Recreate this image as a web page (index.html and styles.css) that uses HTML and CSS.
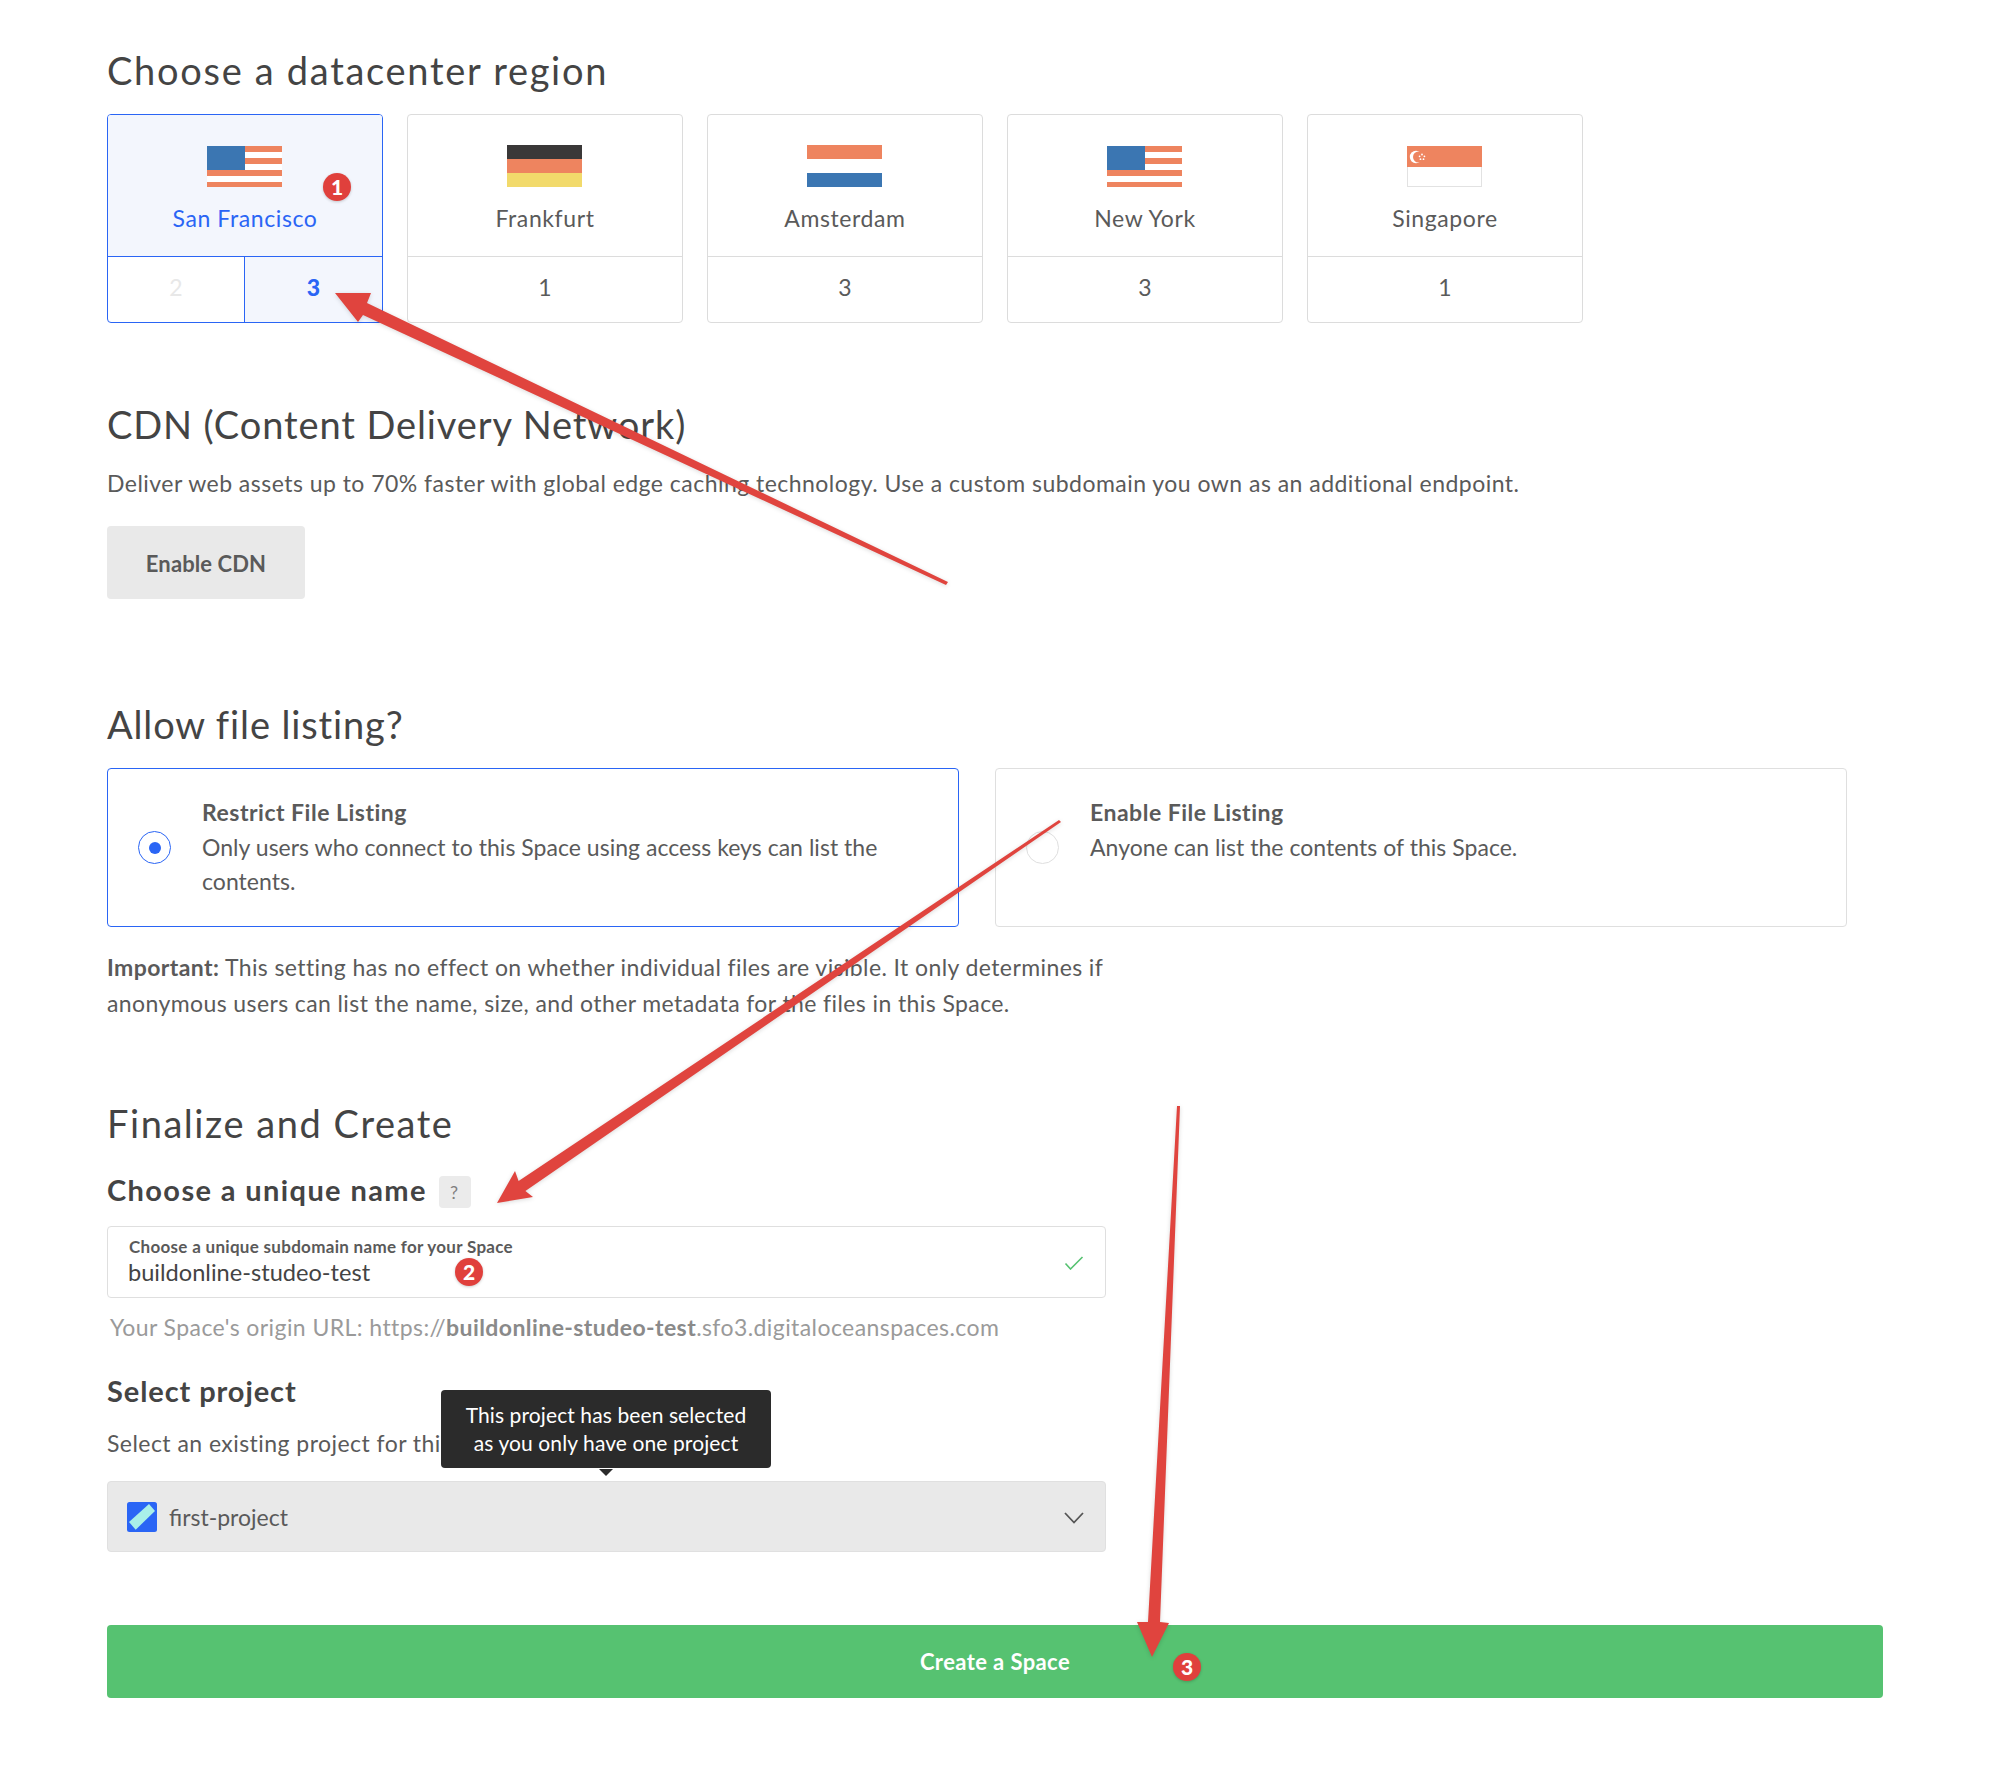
FILE: index.html
```html
<!DOCTYPE html>
<html lang="en">
<head>
  <meta charset="UTF-8">
  <title>Create a Space</title>
  <link rel="stylesheet" href="styles.css">
</head>
<body>
  <main class="page">
    <h2 class="region-title">Choose a datacenter region</h2>
    <div class="regions">
      <div class="region region-active">
        <div class="region-top">
          <svg class="flag" viewBox="0 0 75 42"><rect y="1" width="75" height="41" fill="#ee845f"/><rect y="7" width="75" height="6" fill="#fff"/><rect y="19" width="75" height="6" fill="#fff"/><rect y="31" width="75" height="6" fill="#fff"/><rect y="1" width="38" height="24" fill="#3b76b2"/></svg>
          <span>San Francisco</span>
        </div>
        <div class="region-bottom">
          <span class="slot slot-off">2</span>
          <span class="slot slot-on">3</span>
        </div>
      </div>
      <div class="region">
        <div class="region-top">
          <svg class="flag" viewBox="0 0 75 42"><rect width="75" height="14" fill="#3a3838"/><rect y="14" width="75" height="14" fill="#ee845f"/><rect y="28" width="75" height="14" fill="#f2da6b"/></svg>
          <span>Frankfurt</span>
        </div>
        <div class="region-bottom"><span class="slot">1</span></div>
      </div>
      <div class="region">
        <div class="region-top">
          <svg class="flag" viewBox="0 0 75 42"><rect width="75" height="14" fill="#ee845f"/><rect y="14" width="75" height="14" fill="#fff"/><rect y="28" width="75" height="14" fill="#3b76b2"/></svg>
          <span>Amsterdam</span>
        </div>
        <div class="region-bottom"><span class="slot">3</span></div>
      </div>
      <div class="region">
        <div class="region-top">
          <svg class="flag" viewBox="0 0 75 42"><rect y="1" width="75" height="41" fill="#ee845f"/><rect y="7" width="75" height="6" fill="#fff"/><rect y="19" width="75" height="6" fill="#fff"/><rect y="31" width="75" height="6" fill="#fff"/><rect y="1" width="38" height="24" fill="#3b76b2"/></svg>
          <span>New York</span>
        </div>
        <div class="region-bottom"><span class="slot">3</span></div>
      </div>
      <div class="region">
        <div class="region-top">
          <svg class="flag" viewBox="0 0 75 42"><rect x=".5" y="21" width="74" height="20.500" fill="#fff" stroke="#e2e2e2"/><rect y="1" width="75" height="21" fill="#ee845f"/><circle cx="9" cy="12" r="6.200" fill="#fff"/><circle cx="11.500" cy="12" r="5.500" fill="#ee845f"/><circle cx="15" cy="9.500" r=".9" fill="#fff"/><circle cx="12.600" cy="11.300" r=".9" fill="#fff"/><circle cx="17.400" cy="11.300" r=".9" fill="#fff"/><circle cx="13.500" cy="14.200" r=".9" fill="#fff"/><circle cx="16.500" cy="14.200" r=".9" fill="#fff"/></svg>
          <span>Singapore</span>
        </div>
        <div class="region-bottom"><span class="slot">1</span></div>
      </div>
    </div>

    <h2 class="cdn-title">CDN (Content Delivery Network)</h2>
    <p class="cdn-text">Deliver web assets up to 70% faster with global edge caching technology. Use a custom subdomain you own as an additional endpoint.</p>
    <button class="btn-grey">Enable CDN</button>

    <h2 class="listing-title">Allow file listing?</h2>
    <div class="listing-row">
      <div class="listing listing-active">
        <span class="radio"></span>
        <div class="listing-text">
          <strong>Restrict File Listing</strong>
          <p>Only users who connect to this Space using access keys can list the contents.</p>
        </div>
      </div>
      <div class="listing">
        <span class="radio"></span>
        <div class="listing-text">
          <strong>Enable File Listing</strong>
          <p>Anyone can list the contents of this Space.</p>
        </div>
      </div>
    </div>
    <p class="important"><strong>Important:</strong> This setting has no effect on whether individual files are visible. It only determines if anonymous users can list the name, size, and other metadata for the files in this Space.</p>

    <h2 class="final-title">Finalize and Create</h2>
    <div class="form-col">
      <h3 class="name-title">Choose a unique name <span class="help">?</span></h3>
      <div class="name-field">
        <div>
          <label>Choose a unique subdomain name for your Space</label>
          <div class="name-value">buildonline-studeo-test</div>
        </div>
        <svg class="check" viewBox="0 0 20 14"><path d="M1.500 7.500l5 5.500L18.500 1" fill="none" stroke="#56c271" stroke-width="1.600"/></svg>
      </div>
      <p class="origin">Your Space's origin URL: https://<b>buildonline-studeo-test</b>.sfo3.digitaloceanspaces.com</p>

      <h3 class="project-title">Select project</h3>
      <p class="project-text">Select an existing project for this Space to belong to.</p>
      <div class="project-wrap">
        <div class="tooltip">This project has been selected<br>as you only have one project</div>
        <div class="project-select">
          <svg class="project-icon" viewBox="0 0 30 30"><rect width="30" height="30" rx="2.500" fill="#2a65f5"/><polygon points="22,2 28,9 8.700,27.700 2,20" fill="#a9efe9"/></svg>
          <span>first-project</span>
          <svg class="chevron" viewBox="0 0 20 12"><path d="M1 1l9 9.500L19 1" fill="none" stroke="#555" stroke-width="1.800"/></svg>
        </div>
      </div>
    </div>

    <button class="btn-create">Create a Space</button>
  </main>

  <!-- red annotations drawn over the screenshot -->
  <svg class="marks" viewBox="0 0 2003 1769">
    <polygon points="948,582 367,303 371,293 335,293 358,322 363,315 946,585" />
    <polygon points="1059,820 518.600,1181 515,1171 497,1203 533,1197 525.400,1191 1061,822" />
    <polygon points="1177,1106 1148,1622 1137,1622 1152,1657 1169,1623 1160,1622 1180,1106" />
  </svg>
  <span class="badge badge-1">1</span>
  <span class="badge badge-2">2</span>
  <span class="badge badge-3">3</span>
</body>
</html>
```

FILE: styles.css
```css
body {
  margin: 0;
  background: #fff;
  font-family: "Lato", sans-serif;
  color: #5a5a5a;
  position: relative;
  min-height: 1769px;
}
.page {
  width: 1776px;
  margin-left: 107px;
  padding-top: 48px;
}
h2 {
  margin: 0;
  font-size: 38px;
  line-height: 44px;
  font-weight: 400;
  color: #444;
}
p {
  margin: 0;
}
.region-title {
  letter-spacing: 1.7px;
}
.regions {
  display: flex;
  gap: 24px;
  margin-top: 22px;
}
.region {
  width: 276px;
  height: 209px;
  box-sizing: border-box;
  border: 1px solid #dcdcdc;
  border-radius: 4px;
  display: flex;
  flex-direction: column;
  font-size: 23px;
}
.region-top {
  height: 142px;
  border-bottom: 1px solid #dcdcdc;
  display: flex;
  flex-direction: column;
  align-items: center;
  padding-top: 30px;
  box-sizing: border-box;
  letter-spacing: .6px;
}
.flag {
  width: 75px;
  height: 42px;
  margin: 0 2px 13px 0;
}
.region-top span {
  line-height: 36px;
}
.region-bottom {
  flex: 1;
  display: flex;
  padding-bottom: 5px;
}
.slot {
  flex: 1;
  display: flex;
  align-items: center;
  justify-content: center;
}
.region-active {
  border-color: #2a65f5;
}
.region-active .region-top {
  background: #f3f6fd;
  border-bottom-color: #2a65f5;
  color: #2a65f5;
  border-radius: 3px 3px 0 0;
}
.region-active .region-bottom {
  padding-bottom: 0;
}
.slot-off {
  flex: 0 0 136px;
  color: #e8e8e8;
  padding-bottom: 5px;
}
.slot-on {
  background: #f3f6fd;
  color: #2a65f5;
  font-weight: 900;
  border-left: 1px solid #2a65f5;
  border-radius: 0 0 3px 0;
  padding-bottom: 5px;
}
.cdn-title {
  margin-top: 79px;
  letter-spacing: .9px;
}
.cdn-text {
  margin-top: 23px;
  font-size: 23px;
  line-height: 28px;
  letter-spacing: .47px;
}
.btn-grey {
  display: block;
  margin-top: 29px;
  width: 198px;
  height: 73px;
  padding-top: 2px;
  border: none;
  border-radius: 4px;
  background: #e9e9e9;
  color: #5a5a5a;
  font-family: inherit;
  font-size: 22px;
  font-weight: 700;
  letter-spacing: .1px;
}
.listing-title {
  margin-top: 103px;
  letter-spacing: .87px;
}
.listing-row {
  display: flex;
  gap: 36px;
  margin-top: 22px;
}
.listing {
  width: 852px;
  height: 159px;
  box-sizing: border-box;
  border: 1px solid #dfdfdf;
  border-radius: 4px;
  display: flex;
  align-items: center;
  padding-left: 30px;
  font-size: 23px;
  line-height: 34px;
  letter-spacing: .03px;
}
.listing-active {
  border-color: #2a65f5;
}
.radio {
  width: 33px;
  height: 33px;
  flex: none;
  box-sizing: border-box;
  border: 1px solid #dfdfdf;
  border-radius: 50%;
  display: flex;
  align-items: center;
  justify-content: center;
}
.listing-active .radio {
  border-color: #2a65f5;
}
.listing-active .radio::after {
  content: "";
  width: 12px;
  height: 12px;
  border-radius: 50%;
  background: #2a65f5;
}
.listing-text {
  align-self: flex-start;
  padding: 26px 50px 0 31px;
}
.listing-text strong {
  font-weight: 700;
  letter-spacing: .5px;
}
.listing-text p {
  margin-top: 1px;
}
.important {
  width: 1100px;
  margin-top: 22px;
  font-size: 23px;
  line-height: 36px;
  letter-spacing: .4px;
}
.final-title {
  margin-top: 80px;
  letter-spacing: 1.55px;
}
.form-col {
  width: 999px;
}
h3 {
  margin: 0;
  font-size: 29px;
  line-height: 36px;
  font-weight: 700;
  color: #444;
}
.name-title {
  margin-top: 26px;
  display: flex;
  align-items: center;
  gap: 12px;
  letter-spacing: 1.38px;
}
.help {
  width: 32px;
  height: 32px;
  border-radius: 4px;
  background: #ebebeb;
  color: #808080;
  font-size: 18px;
  font-weight: 400;
  display: flex;
  align-items: center;
  justify-content: center;
  margin-top: 5px;
}
.name-field {
  margin-top: 18px;
  height: 72px;
  box-sizing: border-box;
  border: 1px solid #dfdfdf;
  border-radius: 4px;
  padding: 10px 21px 0;
  display: flex;
  justify-content: space-between;
}
.name-field label {
  display: block;
  font-size: 17px;
  line-height: 20px;
  font-weight: 700;
  letter-spacing: .3px;
}
.name-value {
  margin-left: -1px;
  font-size: 23.600px;
  line-height: 30px;
  color: #444;
}
.check {
  width: 20px;
  height: 14px;
  margin-top: 19px;
}
.origin {
  margin-top: 15px;
  padding-left: 3px;
  font-size: 23px;
  line-height: 28px;
  letter-spacing: .42px;
  color: #9a9a9a;
}
.origin b {
  color: #8a8a8a;
}
.project-title {
  margin-top: 32px;
  letter-spacing: .9px;
}
.project-text {
  margin-top: 20px;
  font-size: 23px;
  line-height: 28px;
  letter-spacing: .45px;
}
.project-wrap {
  position: relative;
  margin-top: 24px;
}
.tooltip {
  position: absolute;
  left: 334px;
  bottom: 84px;
  width: 330px;
  box-sizing: border-box;
  padding: 11px 0;
  background: #2b2b2b;
  border-radius: 4px;
  color: #fff;
  font-size: 21px;
  line-height: 28px;
  letter-spacing: .1px;
  text-align: center;
}
.tooltip::after {
  content: "";
  position: absolute;
  left: 158px;
  top: 79px;
  border: 7px solid transparent;
  border-top-color: #2b2b2b;
  border-bottom: none;
}
.project-select {
  height: 71px;
  box-sizing: border-box;
  border: 1px solid #e0e0e0;
  border-radius: 4px;
  background: #e9e9e9;
  padding: 0 21px 0 19px;
  display: flex;
  align-items: center;
  font-size: 23px;
}
.project-icon {
  width: 30px;
  height: 30px;
  margin-right: 12px;
}
.chevron {
  width: 20px;
  height: 12px;
  margin-left: auto;
  margin-top: 2px;
}
.btn-create {
  display: block;
  margin-top: 73px;
  width: 100%;
  height: 73px;
  border: none;
  border-radius: 4px;
  background: #56c271;
  color: #fff;
  font-family: inherit;
  font-size: 22px;
  font-weight: 700;
  letter-spacing: .4px;
}
.marks {
  position: absolute;
  left: 0;
  top: 0;
  width: 2003px;
  height: 1769px;
  fill: #e0443e;
  filter: drop-shadow(0 1px 2px rgba(0, 0, 0, .15));
}
.badge {
  position: absolute;
  width: 28px;
  height: 28px;
  border-radius: 50%;
  background: #e0403c;
  color: #fff;
  font-size: 21px;
  font-weight: 900;
  line-height: 28px;
  text-align: center;
  box-shadow: 0 1px 3px rgba(0, 0, 0, .2);
}
.badge-1 {
  left: 323px;
  top: 173px;
}
.badge-2 {
  left: 455px;
  top: 1258px;
}
.badge-3 {
  left: 1173px;
  top: 1653px;
}
```
